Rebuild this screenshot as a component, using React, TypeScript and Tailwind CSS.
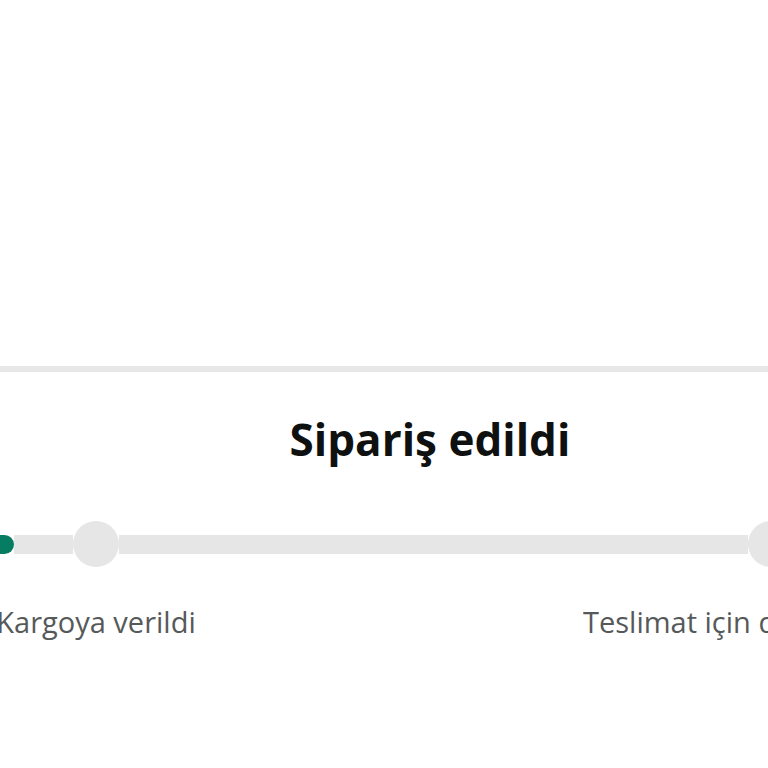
const font = { fontFamily: '"Open Sans", "Noto Sans", sans-serif' }

const Circle = () => <div className="size-[46px] shrink-0 rounded-full bg-[#e6e6e6]" />

const Tracker = () => (
  <div className="flex w-[800px] items-center">
    <div className="h-[19px] w-[14px] shrink-0 rounded-r-full bg-[#067d62]" />
    <div className="h-[19px] w-[59px] shrink-0 bg-[#e6e6e6]" />
    <Circle />
    <div className="h-[19px] w-[629px] shrink-0 bg-[#e6e6e6]" />
    <Circle />
  </div>
)

export default function App() {
  return (
    <div className="h-[768px] w-[768px] overflow-hidden bg-white" style={font}>
      <div className="h-[366px]" />
      <div className="h-[6px] bg-[#e7e7e7]" />

      <h1 className="mt-[45px] pl-[92px] text-center text-[44px] leading-[44px] font-bold text-[#0f1111]">
        Sipariş edildi
      </h1>

      <div className="mt-[60px]">
        <Tracker />
      </div>

      <div className="mt-[40px] flex w-[1200px] text-[29px] leading-[29px] text-[#565959]">
        <div className="ml-[-104px] w-[400px] shrink-0 text-center">Kargoya verildi</div>
        <div className="ml-[287px] shrink-0 whitespace-nowrap">Teslimat için dağıtımda</div>
      </div>
    </div>
  )
}
